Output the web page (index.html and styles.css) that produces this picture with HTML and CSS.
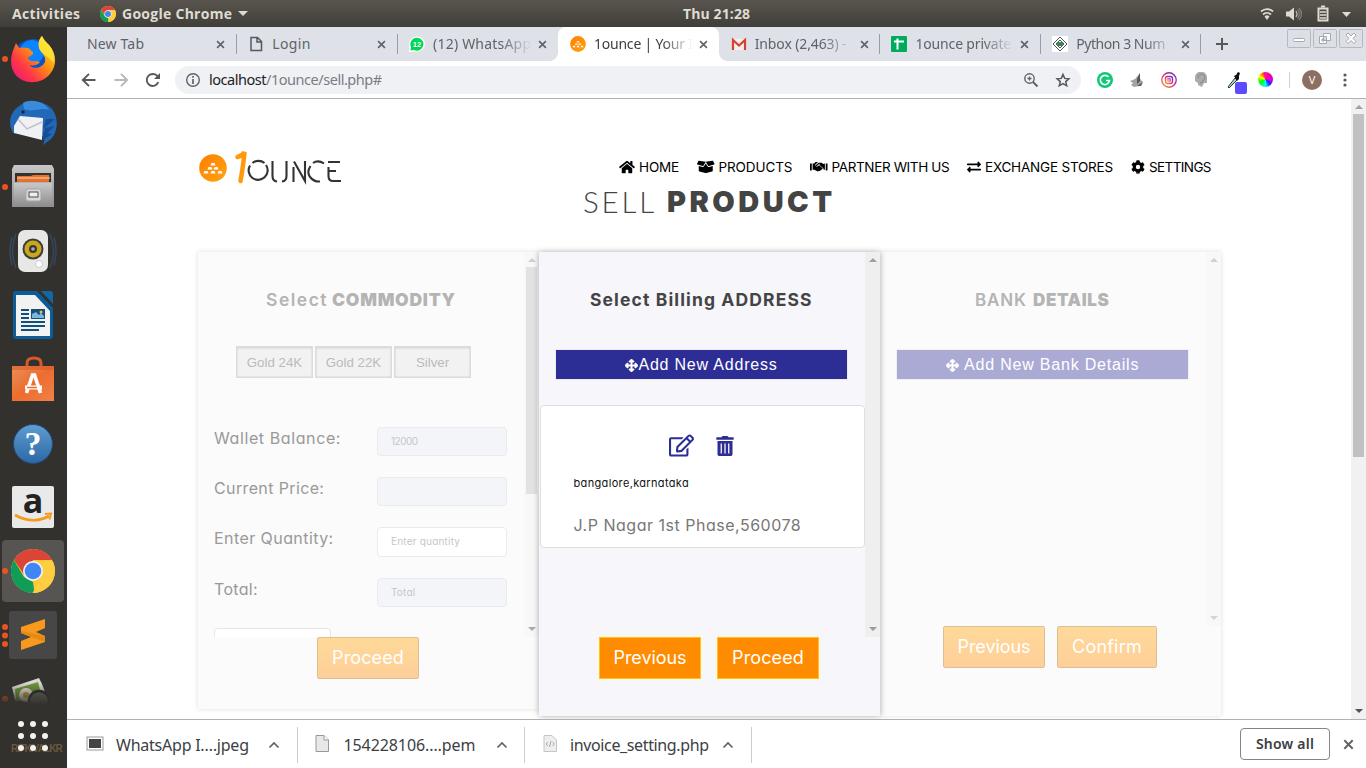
FILE: index.html
```html
<!DOCTYPE html>
<html lang="en">
<head>
<meta charset="utf-8">
<title>1ounce | Your</title>
<link rel="stylesheet" href="styles.css">
</head>
<body>
<svg width="0" height="0" class="defs">
  <defs>
    <linearGradient id="fox" x1="1" y1="0" x2="0" y2="1"><stop offset="0" stop-color="#fff44f"/><stop offset=".4" stop-color="#ff980e"/><stop offset=".7" stop-color="#ff3647"/><stop offset="1" stop-color="#e31587"/></linearGradient>
    <linearGradient id="cab" x1="0" y1="0" x2="0" y2="1"><stop offset="0" stop-color="#c8c8c8"/><stop offset="1" stop-color="#8e8e8e"/></linearGradient>
    <linearGradient id="blu" x1="0" y1="0" x2="0" y2="1"><stop offset="0" stop-color="#5e9ed1"/><stop offset="1" stop-color="#2c67a4"/></linearGradient>
    <linearGradient id="bag" x1="0" y1="0" x2="1" y2="1"><stop offset="0" stop-color="#e8905a"/><stop offset=".5" stop-color="#ee6c2d"/><stop offset="1" stop-color="#f0834a"/></linearGradient>
    <linearGradient id="gold" x1="0" y1="0" x2="1" y2="1"><stop offset="0" stop-color="#ff7d00"/><stop offset="1" stop-color="#ffa510"/></linearGradient>
    <linearGradient id="insta" x1="0" y1="1" x2="1" y2="0"><stop offset="0" stop-color="#f9a03f"/><stop offset=".45" stop-color="#e1306c"/><stop offset="1" stop-color="#5b2bd0"/></linearGradient>
    <symbol id="chrome" viewBox="0 0 44 44">
      <circle cx="22" cy="22" r="22" fill="#fbc934"/>
      <path d="M3 11A22 22 0 0 1 41.1 11H22L14 27Z" fill="#db4437"/>
      <path d="M2.9 11L13 28L22 33L23.500 44A22 22 0 0 1 2.900 11Z" fill="#0f9d58"/>
      <path d="M22 12H41.500A22 22 0 0 1 21.500 44L31 27Z" fill="#ffcd40"/>
      <circle cx="22" cy="22" r="10" fill="#f1f1f1"/><circle cx="22" cy="22" r="8.300" fill="#4285f4"/>
    </symbol>
    <symbol id="ounce" viewBox="0 0 28 28">
      <circle cx="14" cy="14" r="13.800" fill="url(#gold)"/>
      <path d="M12.500 9h3l1 2.500h-5zM9.500 13h3l1 2.500H8.500zM15.500 13h3l1 2.500h-5zM5.500 17h3l1 2.500h-5zM12.500 17h3l1 2.500h-5zM19.500 17h3l1 2.500h-5z" fill="#fff"/>
    </symbol>
    <symbol id="x" viewBox="0 0 10 10"><path d="M1.200 1.200l7.600 7.600M8.800 1.200L1.200 8.800" stroke="#5f6368" stroke-width="1.800" fill="none"/></symbol>
    <symbol id="up" viewBox="0 0 12 8"><path d="M1.500 6.500L6 2l4.500 4.500" stroke="#5f6368" stroke-width="1.700" fill="none"/></symbol>
    <symbol id="move" viewBox="0 0 512 512"><path fill="currentColor" stroke="currentColor" stroke-width="22" d="M352.200 425.800l-79.200 79.200c-9.400 9.400-24.600 9.400-33.900 0l-79.200-79.200c-15.100-15.100-4.400-41 17-41h51.200V284H127.200v51.200c0 21.400-25.900 32.100-41 17L7 272.900c-9.400-9.400-9.400-24.600 0-33.900L86.200 159.800c15.100-15.100 41-4.400 41 17V228H228V127.200h-51.200c-21.400 0-32.100-25.900-17-41l79.200-79.200c9.400-9.400 24.600-9.400 33.900 0l79.200 79.200c15.100 15.100 4.400 41-17 41h-51.200V228h100.900v-51.200c0-21.400 25.900-32.100 41-17l79.200 79.200c9.400 9.400 9.400 24.600 0 33.900L425.800 352.200c-15.100 15.100-41 4.400-41-17V284h-100.900v100.800h51.200c21.400 0 32.200 25.900 17.100 41z"/></symbol>
  </defs>
</svg>

<header class="topbar">
  <span class="activities">Activities</span>
  <svg class="tb-chrome"><use href="#chrome"/></svg>
  <span class="appname">Google Chrome</span>
  <i class="caret"></i>
  <span class="clock">Thu 21:28</span>
  <svg class="tray" viewBox="0 0 96 20" fill="none">
    <path d="M2 7.500a9 9 0 0 1 12 0M4 10.500a6 6 0 0 1 8 0" stroke="#dfdbd2" stroke-width="1.700"/><path d="M5.500 12.500a3.500 3.500 0 0 1 5 0L8 16z" fill="#dfdbd2"/>
    <path d="M27 7.500h3l5-4v13l-5-4h-3z" fill="#dfdbd2"/><path d="M37 7q2 3 0 6" stroke="#bdb9b1" stroke-width="1.200"/><path d="M38.500 5.500q3.500 4.500 0 9M40 4q5 6 0 12" stroke="#85827b" stroke-width="1.200"/>
    <path d="M59.500 4.500h9v12h-9z" stroke="#dfdbd2" stroke-width="2"/><path d="M62 1.500h4v2h-4z" fill="#dfdbd2"/><path d="M61 8h6M61 11h6M61 14h6" stroke="#dfdbd2" stroke-width="1.300"/>
    <path d="M83 8h9l-4.500 5z" fill="#dfdbd2"/>
  </svg>
</header>

<div class="desktop">
  <nav class="dock">
    <div class="app one"><svg viewBox="0 0 64 64">
      <circle cx="32" cy="32" r="20" fill="#0a55c4"/><circle cx="31" cy="25" r="12" fill="#0a84ff"/>
      <path d="M41 9c2 4 4 6 7 9 8 9 8 21 1 29-9 11-27 11-35 0-5-7-5-17-1-26l2-5 3 5c3-1 6 0 9 0 3 1 2 3 5 4 1 3-4 4-5 6 2 5 8 2 12 4-3 4-8 4-11 3 5 5 13 3 16-3 1-5-2-8-5-12-2-5-2-10 2-14z" fill="url(#fox)"/>
      <path d="M41 9c2 4 4 6 7 9 5 6 6 12 4 18-2-6-12-8-14-15-1-4 0-9 3-12z" fill="#ffe633" opacity=".85"/>
    </svg></div>
    <div class="app"><svg viewBox="0 0 64 64">
      <path d="M18 15c10-7 25-6 33 3 7 9 6 23-1 30l-8 6c2-5 2-7 0-9L12 42C7 33 8 22 18 15z" fill="#2268b8"/>
      <path d="M22 12c8-5 22-1 26 7-10-3-15 3-25-1z" fill="#3b8bdc"/><path d="M54 28l-12 10 3-10zM54 35l-12 11 2-9zM51 43l-9 6V41z" fill="#174e93"/>
      <path d="M13 35l6-10 23 2-1 22-28-7z" fill="#f0f1f5"/><path d="M17 28l9 10 15-7" fill="none" stroke="#c0c0c5" stroke-width="1.400"/><circle cx="22" cy="21" r="1.800" fill="#102b52"/>
    </svg></div>
    <div class="app one"><svg viewBox="0 0 64 64">
      <path d="M13 10h38l2 4v38H11V14z" fill="url(#cab)"/><path d="M14 18h36v9H14z" fill="#35332d"/><path d="M16 21h14l2-1h16v7H16z" fill="#e57330"/><path d="M16 23h33" stroke="#ffd2ae"/>
      <path d="M13 28h38v23H13z" fill="url(#cab)"/><rect x="25" y="34" width="15" height="12" rx="2" fill="#d8d8d8" stroke="#a6a6a6"/><rect x="28" y="37" width="9" height="5" fill="#eee" stroke="#4d4d4d"/>
    </svg></div>
    <div class="app"><svg viewBox="0 0 64 64">
      <path d="M15 15q-7 17 0 34M49 15q7 17 0 34M11 18q-4 14 0 28M53 18q4 14 0 28" stroke="#34455c" stroke-width="1.600" fill="none"/>
      <rect x="17" y="11" width="30" height="42" rx="7" fill="#e7e7e5"/><circle cx="32" cy="30" r="10.500" fill="#3d3d3b"/><circle cx="32" cy="30" r="8.500" fill="#c9a81c"/><circle cx="32" cy="30" r="4" fill="#3a3a35"/><circle cx="32" cy="30" r="1.800" fill="#aaa"/><circle cx="38" cy="45" r="3.500" fill="#fff" stroke="#ccc"/>
    </svg></div>
    <div class="app"><svg viewBox="0 0 64 64">
      <path d="M14 8h22l16 17v28q0 3-3 3H15q-3 0-3-3V11q0-3 2-3z" fill="#0b5c97"/><path d="M40 8h9q3 0 3 3v10z" fill="#1268a7"/><path d="M15 12h19l15 16v25H15z" fill="#f2f2f2"/>
      <path d="M20 27h8M20 31h8M20 35h8M20 39h24M20 43h24M20 47h18" stroke="#10507b" stroke-width="2"/><path d="M30 26h14v10H30z" fill="#10507b"/><path d="M31 35v-4l4-2 3 3 2-2 3 3v2z" fill="#7bb6db"/><circle cx="40" cy="29" r="1.500" fill="#f5bd3a"/>
    </svg></div>
    <div class="app"><svg viewBox="0 0 64 64">
      <path d="M26 21v-5q0-5 7-5t7 5v5" stroke="#d9582b" stroke-width="3" fill="none"/><path d="M11 19h42v35H11z" fill="url(#bag)"/><path d="M11 19h42v4H11z" fill="#d75627" opacity=".5"/>
      <path d="M25.500 46l6-18h2l6 18" stroke="#fff" stroke-width="3.600" fill="none"/><path d="M24 40.500h17" stroke="#fff" stroke-width="4"/><path d="M26 40.500h10" stroke="#ee6c2d" stroke-width="1.500"/>
    </svg></div>
    <div class="app"><svg viewBox="0 0 64 64"><circle cx="32" cy="33" r="19.500" fill="url(#blu)" stroke="#1f4a78"/><text x="32" y="44" class="qmark">?</text></svg></div>
    <div class="app"><svg viewBox="0 0 64 64"><rect x="11" y="11" width="42" height="42" rx="2" fill="#e9e9e9"/><text x="32" y="38" class="amz">a</text><path d="M14 40q18 10 34 1" stroke="#f79a1c" stroke-width="2.600" fill="none"/><path d="M44 39l6-.500-1.500 6" stroke="#f79a1c" stroke-width="2" fill="none"/></svg></div>
    <div class="app one active"><svg viewBox="0 0 64 64"><use href="#chrome" x="10" y="10" width="44" height="44"/></svg></div>
    <div class="app three"><svg viewBox="0 0 64 64"><rect x="8" y="8" width="48" height="48" rx="3" fill="#474747"/><path d="M20 24l24-8v9l-9 4 9 4v6l-24 8v-9l10-4-10-4z" fill="#f8981d"/><path d="M20 30l0-2 24 5v6z" fill="#e58a14"/></svg></div>
    <div class="app one clipped"><svg viewBox="0 0 64 64"><path d="M11 20l27-9 3 6 6 16H14z" fill="#d8d8d2"/><path d="M14 22l23-7 5 19H15z" fill="#6e9438"/><circle cx="25" cy="28" r="7" fill="#e9e8dc"/><circle cx="25" cy="28" r="3" fill="#c6a32e"/><circle cx="38" cy="34" r="10" fill="#5d6655" stroke="#25282a" stroke-width="2.500"/></svg></div>
    <div class="launcher"><span class="wall">RIFKIVALKR</span><svg viewBox="0 0 67 64" fill="#f2f2f0"><circle cx="21" cy="20" r="3"/><circle cx="33" cy="20" r="3"/><circle cx="45" cy="20" r="3"/><circle cx="21" cy="32" r="3"/><circle cx="33" cy="32" r="3"/><circle cx="45" cy="32" r="3"/><circle cx="21" cy="44" r="3"/><circle cx="33" cy="44" r="3"/><circle cx="45" cy="44" r="3"/></svg></div>
  </nav>

  <div class="browser">
    <div class="tabs">
      <div class="tab plain"><span class="t t1">New Tab</span><svg class="x"><use href="#x"/></svg></div>
      <div class="tab sep"><svg class="fav" viewBox="0 0 16 16"><path d="M3 1.500h6.500l4 4v9H3zM9 1.500V6h4.500" fill="none" stroke="#55585d" stroke-width="1.500"/></svg><span class="t t2">Login</span><svg class="x"><use href="#x"/></svg></div>
      <div class="tab sep"><svg class="fav" viewBox="0 0 16 16"><path d="M0 16V8a8 7.500 0 1 1 8 7.500z" fill="#fff"/><path d="M1.500 14.500L2 11a6.500 6.500 0 1 1 3 3z" fill="#00d757"/><text x="8" y="11" class="badge">12</text></svg><span class="t t3 fade">(12) WhatsApp</span><svg class="x"><use href="#x"/></svg></div>
      <div class="tab on"><svg class="fav"><use href="#ounce"/></svg><span class="t t4 fade">1ounce | Your I</span><svg class="x"><use href="#x"/></svg></div>
      <div class="tab"><svg class="fav" viewBox="0 0 16 16"><path d="M1 3h14v11H1z" fill="#f4f0ef"/><path d="M2 14V4l6 5.500L14 4v10" fill="none" stroke="#d8402f" stroke-width="2.200"/></svg><span class="t t5 fade">Inbox (2,463) -</span><svg class="x"><use href="#x"/></svg></div>
      <div class="tab sep"><svg class="fav" viewBox="0 0 16 16"><rect width="16" height="16" rx="1" fill="#00ac5c"/><path d="M3 5.500h10M6.500 2.500v11" stroke="#fff" stroke-width="2"/></svg><span class="t t6 fade">1ounce private</span><svg class="x"><use href="#x"/></svg></div>
      <div class="tab sep"><svg class="fav" viewBox="0 0 16 16"><path d="M0 0h16v16H0z" fill="#fff"/><path d="M8 1l7 7-7 7-7-7zM8 4l4 4-4 4-4-4z" fill="none" stroke="#4e5550"/><path d="M4.500 7l2-1.500 1.500 1 1.500-1 2 1.500L10 10H6z" fill="#398253"/></svg><span class="t t7 fade">Python 3 Num</span><svg class="x"><use href="#x"/></svg></div>
      <div class="newtab"><svg viewBox="0 0 12 12"><path d="M6 0v12M0 6h12" stroke="#55585d" stroke-width="2"/></svg></div>
      <div class="winbtns">
        <svg viewBox="0 0 24 19"><rect x=".5" y=".5" width="23" height="18" rx="1" class="wb"/><rect x="6.500" y="9.500" width="11" height="3" rx="1" class="wi"/></svg>
        <svg viewBox="0 0 24 19"><rect x=".5" y=".5" width="23" height="18" rx="1" class="wb"/><path d="M10.500 4.500h7v7h-7zM6.500 7.500h7v7h-7zM9 10h2v2H9z" class="wi"/></svg>
        <svg viewBox="0 0 24 19"><rect x=".5" y=".5" width="23" height="18" rx="1" class="wb"/><path d="M7 6l2-2 3 3 3-3 2 2-3 3.500 3 3-2 2-3-3-3 3-2-2 3-3z" class="wi"/></svg>
      </div>
    </div>

    <div class="toolbar">
      <svg class="navbtn" viewBox="0 0 16 16"><path d="M14.500 8H2M8 1.800L1.800 8 8 14.200" fill="none" stroke="#55585d" stroke-width="1.900"/></svg>
      <svg class="navbtn" viewBox="0 0 16 16"><path d="M1.500 8H14M8 1.800L14.200 8 8 14.200" fill="none" stroke="#b6b8ba" stroke-width="1.900"/></svg>
      <svg class="navbtn" viewBox="0 0 16 16"><path d="M13.300 10.200A6 6 0 1 1 12 3.700l1.500 1.500" fill="none" stroke="#55585d" stroke-width="1.900"/><path d="M15 1v6H9z" fill="#55585d"/></svg>
      <div class="omni">
        <svg class="info" viewBox="0 0 16 16"><circle cx="8" cy="8" r="6.300" fill="none" stroke="#5f6368" stroke-width="1.400"/><path d="M8 7v5M8 4v1.700" stroke="#5f6368" stroke-width="1.700"/></svg>
        <span class="url"><b>localhost</b>/1ounce/sell.php#</span>
        <svg class="oi" viewBox="0 0 16 16" fill="none" stroke="#5f6368" stroke-width="1.400"><circle cx="6.500" cy="6.500" r="4.700"/><path d="M10 10l4.500 4.500"  stroke-width="1.900"/><path d="M6.500 4.500v4M4.500 6.500h4"/></svg>
        <svg class="oi" viewBox="0 0 16 16"><path d="M8 2.500l1.700 3.900 4.200.400-3.200 2.800 1 4.200L8 11.600l-3.700 2.200 1-4.200L2.100 6.800 6.300 6.400z" fill="none" stroke="#55585d" stroke-width="1.500"/></svg>
      </div>
      <div class="exts">
        <svg viewBox="0 0 16 16"><circle cx="8" cy="8" r="8" fill="#10c778"/><path d="M11.500 5A4.600 4.600 0 1 0 12.500 8.500H9" fill="none" stroke="#fff" stroke-width="1.700"/></svg>
        <svg viewBox="0 0 16 16"><path d="M1 9l5-2 5-6 0 6 3 3-4 4-5 1-3-2 2-2z" fill="#a3a3a3"/><path d="M8 7l3-6v8l-3 3zM8 14l6-4-2 4z" fill="#555"/></svg>
        <svg viewBox="0 0 16 16" fill="none" stroke="url(#insta)" stroke-width="1.400"><circle cx="8" cy="8" r="7.200"/><rect x="4.500" y="4.500" width="7" height="7" rx="2"/><rect x="6.800" y="6.800" width="2.400" height="2.400" stroke-width="1"/></svg>
        <svg viewBox="0 0 16 16"><path d="M2 6a6 6 0 0 1 12-1v6h-3l-2 4-4-2V11L2 9z" fill="#ababab"/><path d="M5 6a3.500 3.500 0 1 1 4 3M7 11l3-1" stroke="#888" fill="none"/></svg>
        <svg class="picker" viewBox="0 0 20 22"><path d="M1 15l7-9 2 2-8 8z" fill="#b9d0c0" stroke="#243" /><path d="M7 4l2-1 2-3 2 1-1 3 0 3-2 2z" fill="#111"/><rect x="8" y="10" width="12" height="12" rx="2" fill="#5c4bff"/></svg>
        <i class="wheel"></i>
      </div>
      <i class="tsep"></i><span class="avatar">V</span>
      <svg class="kebab" viewBox="0 0 4 14" fill="#55585d"><circle cx="2" cy="2" r="1.600"/><circle cx="2" cy="7" r="1.600"/><circle cx="2" cy="12" r="1.600"/></svg>
    </div>

    <div class="viewport">
      <main class="page">
        <div class="nav">
          <svg class="logo" viewBox="0 0 144 36">
            <use href="#ounce" x="0" y="5" width="28" height="28"/>
            <path d="M38.500 8q5-1 7-5-1 12-4 29" fill="none" stroke="#ff9a0d" stroke-width="4.500" stroke-linecap="round"/>
            <g fill="none" stroke="#333" stroke-width="2.100"><path d="M51 16.500a9.500 9.500 0 1 0 16-.500M53.500 14a9.500 9.500 0 0 1 12 0"/><path d="M73.500 12v15q0 5 4.500 5.500M87.500 12v15q0 5-4.500 5.500"/><path d="M94.500 33V18M95 12.500L106 32V12"/><path d="M125 14.500q-6-4-11-.500M111.500 17q-4 6-.500 11 4 5 10 4.500"/><path d="M129 13h12M129.500 18v9q0 5 4.500 5h8M130 22h7"/></g>
          </svg>
          <ul class="menu">
            <li class="m1"><svg viewBox="0 0 576 512"><path d="M280 148L96 300v164a16 16 0 0 0 16 16h112a16 16 0 0 0 16-16v-96a16 16 0 0 1 16-16h64a16 16 0 0 1 16 16v96a16 16 0 0 0 16 16h112a16 16 0 0 0 16-16V300L296 148a12 12 0 0 0-16 0zM572 251l-84-69V44a12 12 0 0 0-12-12h-56a12 12 0 0 0-12 12v72l-90-74a48 48 0 0 0-61 0L4 251a12 12 0 0 0-1 17l25 31a12 12 0 0 0 17 2L280 107a12 12 0 0 1 16 0l235 194a12 12 0 0 0 17-2l25-31a12 12 0 0 0-1-17z"/></svg><span>HOME</span></li>
            <li class="m2"><svg viewBox="0 0 640 512"><path d="M425 256c-17 0-33-9-41-24l-64-106-64 106c-9 15-25 24-42 24-4 0-9-1-13-2L64 215v178c0 15 10 28 24 31l217 54c10 3 21 3 31 0l216-54c14-4 24-17 24-31V215l-137 39c-5 1-10 2-14 2zm213-118L587 36c-4-7-11-10-18-10L320 64l92 152c4 6 11 9 18 7l198-57c12-3 17-17 10-28zM53 36L2 138c-6 11-1 25 11 28l197 57c7 2 14-1 18-7L320 64 71 26c-7 0-14 3-18 10z"/></svg><span>PRODUCTS</span></li>
            <li class="m3"><svg viewBox="0 0 640 512"><path d="M0 128h64v256H0zM576 128h64v256h-64zM96 128h54l52-52h92l-86 80c-22 21-22 55 0 76 20 19 54 20 76 0l45-41 123 100c13 11 16 27 5 39-10 13-26 12-34 6 4 32-19 47-41 37-7 26-36 43-61 20-6 21-41 35-69 11L150 352H96zM544 128v224h-44c0-37-20-60-44-77L342 182l20-18-22-24-98 89c-12 8-25 7-33-3-8-11-7-22 3-32l91-82c11-10 25-16 40-16h85l52 52z"/></svg><span>PARTNER WITH US</span></li>
            <li class="m4"><svg viewBox="0 0 512 512"><path d="M0 168v-16c0-13 11-24 24-24h360V80c0-21 26-32 41-17l80 80c9 9 9 25 0 34l-80 80c-15 15-41 4-41-17v-48H24c-13 0-24-11-24-24zm488 152H128v-48c0-21-26-32-41-17L7 335c-9 9-9 25 0 34l80 80c15 15 41 4 41-17v-48h360c13 0 24-11 24-24v-16c0-13-11-24-24-24z"/></svg><span>EXCHANGE STORES</span></li>
            <li class="m5"><svg viewBox="0 0 512 512"><path fill-rule="evenodd" d="M487 316l-42-25c4-23 4-47 0-70l42-25c5-3 8-9 6-14-12-36-31-68-55-94-4-4-10-5-15-2l-43 24c-18-15-39-27-61-35V26c0-6-4-11-9-12-36-8-74-8-109 0-5 1-9 6-9 12v49c-22 8-43 20-61 35L89 86c-5-3-11-2-15 2-24 26-43 58-55 94-2 5 1 11 6 14l42 25c-4 23-4 47 0 70l-42 25c-5 3-8 9-6 14 12 36 31 68 55 94 4 4 10 5 15 2l42-24c18 15 39 27 61 35v49c0 6 4 11 9 12 36 8 74 8 109 0 5-1 9-6 9-12v-49c22-8 43-20 61-35l43 24c5 3 11 2 15-2 24-26 43-58 55-94 1-5-1-11-6-14zM256 336a80 80 0 1 1 0-160 80 80 0 0 1 0 160z"/></svg><span>SETTINGS</span></li>
          </ul>
        </div>
        <h1><span>SELL</span> <b>PRODUCT</b></h1>

        <div class="cards">
          <section class="card side first">
            <div class="scroll">
              <div class="inner">
                <h2 class="h-com"><span>Select</span> <b>COMMODITY</b></h2>
                <div class="kinds"><button>Gold 24K</button><button>Gold 22K</button><button>Silver</button></div>
                <div class="row"><label class="l1">Wallet Balance:</label><span class="inp dis i1">12000</span></div>
                <div class="row"><label class="l2">Current Price:</label><span class="inp dis"></span></div>
                <div class="row"><label class="l3">Enter Quantity:</label><span class="inp open i2">Enter quantity</span></div>
                <div class="row"><label class="l4">Total:</label><span class="inp dis i2">Total</span></div>
                <span class="stub"></span>
              </div>
              <div class="sbar"><i class="su"></i><i class="thumb"></i><i class="sd"></i></div>
            </div>
            <div class="acts"><span class="btn pale b2">Proceed</span></div>
          </section>

          <section class="card focus">
            <div class="scroll">
              <div class="inner">
                <h2 class="h-bill">Select Billing ADDRESS</h2>
                <button class="add"><svg><use href="#move"/></svg>Add New Address</button>
                <div class="addr">
                  <div class="tools">
                    <svg class="edit" viewBox="0 0 576 512"><path d="M402.300 344.900l32-32c5-5 13.700-1.500 13.700 5.700V464c0 26.500-21.500 48-48 48H48c-26.500 0-48-21.500-48-48V112c0-26.500 21.500-48 48-48h273.500c7.100 0 10.700 8.600 5.700 13.700l-32 32c-1.500 1.500-3.500 2.300-5.700 2.300H48v352h352V350.500c0-2.100.800-4.100 2.300-5.600zm156.600-201.800L296.300 405.700l-90.400 10c-26.200 2.900-48.500-19.200-45.600-45.600l10-90.400L432.900 17.100c22.900-22.900 59.900-22.900 82.700 0l43.200 43.200c22.900 22.900 22.900 60 .1 82.800zM460.100 174L402 115.900 216.200 301.800l-7.300 65.300 65.300-7.300L460.100 174zm64.800-79.700l-43.200-43.200c-4.100-4.100-10.800-4.100-14.800 0L436 82l58.100 58.100 30.900-30.900c4-4.200 4-10.800-.100-14.900z"/></svg>
                    <svg class="bin" viewBox="0 0 448 512"><path fill-rule="evenodd" d="M0 84V56c0-13 11-24 24-24h112l10-19c4-8 12-13 21-13h114c9 0 17 5 21 13l10 19h112c13 0 24 11 24 24v28c0 7-5 12-12 12H12C5 96 0 91 0 84zm32 44h384v336c0 26-22 48-48 48H80c-26 0-48-22-48-48zm80 64v256h32V192zm96 0v256h32V192zm96 0v256h32V192z"/></svg>
                  </div>
                  <p class="city">bangalore,karnataka</p>
                  <p class="street">J.P Nagar 1st Phase,560078</p>
                </div>
              </div>
              <div class="sbar"><i class="su"></i><i class="sd"></i></div>
            </div>
            <div class="acts"><span class="btn b1">Previous</span><span class="btn b2">Proceed</span></div>
          </section>

          <section class="card side last">
            <div class="scroll">
              <div class="inner">
                <h2 class="h-bank"><span>BANK</span> <b>DETAILS</b></h2>
                <button class="add"><svg><use href="#move"/></svg>&nbsp;Add New Bank Details</button>
              </div>
              <div class="sbar"><i class="su"></i><i class="sd"></i></div>
            </div>
            <div class="acts"><span class="btn pale b1">Previous</span><span class="btn pale b3">Confirm</span></div>
          </section>
        </div>
      </main>
      <div class="pagebar"><i class="su"></i><i class="thumb"></i><i class="sd"></i></div>
    </div>

    <footer class="shelf">
      <div class="dl d1"><svg class="f" viewBox="0 0 18 20"><rect x="1" y="2" width="16" height="13" fill="#fff" stroke="#999"/><rect x="3" y="4" width="12" height="9" fill="#444"/></svg><span>WhatsApp I.…jpeg</span><svg class="up"><use href="#up"/></svg></div>
      <div class="dl d2"><svg class="f" viewBox="0 0 18 20"><path d="M3 .500h8l4.500 4.500v11.500H3z" fill="#e8e8e8" stroke="#999"/><path d="M11 .500V5h4.500" fill="#fff" stroke="#999"/></svg><span>154228106.…pem</span><svg class="up"><use href="#up"/></svg></div>
      <div class="dl d3"><svg class="f" viewBox="0 0 18 20"><path d="M3 .500h8l4.500 4.500v11.500H3z" fill="#eee" stroke="#c5c5c5"/><path d="M7 7l-2 2 2 2M11.500 7l2 2-2 2M10 6l-1.500 6" fill="none" stroke="#aaa"/></svg><span>invoice_setting.php</span><svg class="up"><use href="#up"/></svg></div>
      <span class="showall">Show all</span>
      <svg class="sx"><use href="#x"/></svg>
    </footer>
  </div>
</div>
</body>
</html>
```
FILE: styles.css
```css
*{box-sizing:border-box}
body{margin:0;width:1366px;height:768px;overflow:hidden;font-family:"Noto Sans","Open Sans",sans-serif;background:#fff}
.defs{position:absolute}
svg{display:block;flex:none}
h1,h2,p,ul{margin:0;padding:0;list-style:none}

/* system bar */
.topbar{height:27px;display:flex;align-items:center;background:linear-gradient(#59554e,#403e39);color:#dfdbd2;font:700 14px "Open Sans",sans-serif;padding-left:12px}
.activities{width:88px;letter-spacing:.33px}
.tb-chrome{width:16px;height:16px}
.appname{margin-left:6px;width:110px;letter-spacing:.27px;white-space:nowrap}
.caret{margin-left:6px;border:5px solid transparent;border-top-color:#dfdbd2;border-bottom:0}
.clock{margin-left:435px;letter-spacing:.11px;width:80px;white-space:nowrap;font-size:14px}
.tray{width:96px;height:20px;margin-left:496px}

.desktop{display:flex;height:741px}
.dock{width:67px;height:741px;background:#33312d;display:flex;flex-direction:column}
.app{height:64px;flex:none;display:flex;align-items:center;padding-left:1px;position:relative}
.app svg{width:64px;height:64px}
.app.one::before{content:"";position:absolute;left:2px;top:29px;width:6px;height:6px;border-radius:50%;background:#e95420}
.app.three::before{content:"";position:absolute;left:2px;top:21px;width:6px;height:6px;border-radius:50%;background:#e95420;box-shadow:0 8.500px #e95420,0 17px #e95420}
.app.active::after{content:"";position:absolute;left:2px;top:1px;width:62px;height:62px;border-radius:4px;background:#575551;z-index:0}
.app.active svg,.app.active::before{z-index:1}
.app.active svg{position:relative}
.clipped{height:37px;overflow:hidden;align-items:flex-start}
.clipped::after{content:"";position:absolute;inset:16px 0 0 0;background:linear-gradient(transparent,#33312dcc 85%,#33312d)}
.launcher{height:64px;display:grid}
.launcher>*{grid-area:1/1}
.launcher svg{width:67px;height:64px}
.wall{margin:36px 0 0 11px;width:56px;height:18px;color:#6b583d;font:700 10px/18px "Liberation Sans",sans-serif;letter-spacing:-.9px;white-space:nowrap}
.qmark{font:700 34px "Liberation Serif",serif;fill:#fff;text-anchor:middle}
.amz{font:700 34px "Open Sans",sans-serif;fill:#222;text-anchor:middle}

/* browser frame */
.browser{width:1299px;height:741px;display:flex;flex-direction:column}
.tabs{height:34px;background:#dee1e8;display:flex;padding-left:8.500px}
.tab{width:160.800px;height:34px;display:flex;align-items:center;padding-left:12px;color:#5f6368;font-size:14px;flex:none;position:relative}
.plain .t{margin-left:-.5px;width:129px}
.fav{width:16px;height:16px}
.t{margin-left:8px;width:105px;white-space:nowrap;overflow:hidden;padding-bottom:2px}
.fade{-webkit-mask-image:linear-gradient(90deg,#000 65%,transparent 94%);mask-image:linear-gradient(90deg,#000 65%,transparent 94%)}
.x{width:9px;height:9px}
.sep::before,.tab:nth-child(7)::after{content:"";position:absolute;left:0;top:7px;width:1px;height:20px;background:#9a9da3}
.tab:nth-child(7)::after{left:auto;right:0}
.on{background:#fff;border-radius:8px 8px 0 0;color:#3c4043}
.on::before,.on::after{content:"";position:absolute;bottom:0;width:8px;height:8px;background:radial-gradient(circle at 0 0,transparent 7.500px,#fff 8px)}
.on::before{left:-8px}
.on::after{right:-8px;transform:scaleX(-1)}
.t1{letter-spacing:.16px}.t2{letter-spacing:.33px}.t3{letter-spacing:.2px}.t4{letter-spacing:-.2px}.t5{letter-spacing:-.12px}.t6{letter-spacing:-.17px}.t7{letter-spacing:-.46px}
.badge{font:700 7.500px "Liberation Sans",sans-serif;fill:#fff;text-anchor:middle}
.newtab{width:40px;display:flex;align-items:center;padding-left:15px}
.newtab svg{width:12px;height:12px}
.winbtns{display:flex;gap:2px;margin-left:46px;padding-top:2px}
.winbtns svg{width:24px;height:19px}
.wb{fill:#dcdfe5;stroke:#b5b8be}.wi{fill:#fff;stroke:#a5a8ae;fill-rule:evenodd}

.toolbar{height:38px;border-bottom:1px solid #b1b1b1;display:flex;align-items:center;padding-left:14px}
.navbtn{width:16px;height:16px;margin-right:16px}
.omni{margin-left:-2px;width:906px;height:28px;border-radius:14px;background:#f0f1f4;display:flex;align-items:center;padding-left:10px}
.info{width:16px;height:16px}
.url{margin-left:8px;width:814px;flex:none;font-size:14.500px;letter-spacing:-.47px;color:#7a7d82;padding-bottom:2px}
.url b{font-weight:400;color:#202124}
.oi{width:16px;height:16px;margin-right:16px}
.exts{display:flex;align-items:center;gap:16px;margin-left:16px}
.exts svg{width:16px;height:16px}
.exts .picker{width:20px;height:22px;margin:6px -5px 0 2px}
.wheel{width:15px;height:15px;border-radius:50%;background:conic-gradient(#f0f,#f06 12%,#c0f 25%,#22f 38%,#0ff 50%,#0f0 68%,#ff0 82%,#f00)}
.tsep{width:1px;height:16px;background:#cfd0d2;margin-left:16px}
.avatar{width:20px;height:20px;border-radius:50%;background:#8d6e63;color:#fff;font:11px/20px "Open Sans",sans-serif;text-align:center;margin-left:12px}
.kebab{width:4px;height:14px;margin-left:21px}

/* page */
.viewport{height:620px;display:flex;overflow:hidden}
.page{width:1284px;height:620px;font-family:Inter,sans-serif;font-feature-settings:"cv11";padding-left:131px;overflow:hidden}
.nav{height:87px;display:flex;align-items:flex-start;padding-top:50px}
.logo{width:144px;height:36px;margin-left:1px}
.menu{display:flex;margin-left:276px;padding-top:9px;font-size:13.500px;line-height:18px;color:#000}
.menu li{display:flex;align-items:center;white-space:nowrap}
.menu svg{height:14px}
.m1 svg{width:16px}.m1{width:78px}.m1 span{margin-left:4px;letter-spacing:-.15px}
.m2 svg{width:17.500px}.m2{width:113px}.m2 span{margin-left:4px;letter-spacing:-.1px}
.m3 svg{width:17.500px}.m3{width:157px}.m3 span{margin-left:4px;letter-spacing:-.37px}
.m4 svg{width:14px}.m4{width:164px}.m4 span{margin-left:4px;letter-spacing:-.2px}
.m5 svg{width:14px}.m5 span{margin-left:4px;letter-spacing:-.6px}
h1{height:66px;font:700 29px/32px Inter,sans-serif;color:#444;padding-left:385px;white-space:nowrap;display:flex}
h1 span{width:84px;font-family:Lato,sans-serif;font-weight:300;font-size:29.500px;letter-spacing:2.800px}
h1 b{letter-spacing:3.450px}
.cards{display:flex;align-items:flex-start}
.card{width:341px;height:464px}
.side{background:#fbfbfb;box-shadow:0 0 5px #0002}
.first{height:457px}
.focus{background:#f6f6fb;box-shadow:0 0 6px #0005;position:relative;z-index:1}
.scroll{display:flex;height:385px;overflow:hidden}
.last .scroll{height:374px}
.inner{width:326px;height:100%;overflow:hidden}
.sbar{width:15px;background:#efefef;display:flex;flex-direction:column;align-items:center;padding:6px 0}
.side .sbar{background:#f8f8f8}
.su{border:4px solid transparent;border-top:0;border-bottom-color:#a0a0a0}
.sd{border:4px solid transparent;border-bottom:0;border-top-color:#999;margin-top:auto}
.side .su{border-bottom-color:#d0d0d0}
.last .sd{border-top-color:#d4d4d4}
.first .sd{border-top-color:#aaa}
.first .thumb{width:11px;height:227px;background:#e2e2e2;margin-top:5px}
h2{font:700 17.500px/24px Inter,sans-serif;color:#444;height:98px;padding-top:36px;white-space:nowrap;display:flex;letter-spacing:1px}
.side h2{color:#b4b4b4}
.h-com{padding-left:68px}.h-com span{font-weight:600;width:66px;letter-spacing:1.500px}.h-com b{letter-spacing:.75px}
.h-bill{padding-left:51px;letter-spacing:1.120px}
.h-bank{padding-left:95px}.side .h-bank{font-size:17px}.h-bank span{font-weight:600;width:58px;letter-spacing:.8px}.h-bank b{letter-spacing:.6px}
.kinds{display:flex;gap:2px;padding-left:38px;margin-top:-4px}
.kinds button{width:77px;height:32px;padding:0;background:#f2f2f2;border:1px solid #dcdcdc;border-top-width:2px;box-shadow:inset 0 0 2px #0003;color:#bbb;font:13.300px "Liberation Sans",Arial,sans-serif}
.kinds+.row{margin-top:49px}
.row{display:flex;height:50.200px;padding-left:16px}
label{width:163px;font-size:16px;line-height:23px;color:#999;white-space:nowrap}
.l1{letter-spacing:.6px}.l2{letter-spacing:.37px}.l3{letter-spacing:.43px}.l4{letter-spacing:.31px}
.inp{width:130px;height:29px;border:1px solid #e9ebee;border-radius:4px;padding-left:13px;font-size:10px;line-height:26px;color:#c6c6c9}
.dis{background:#f4f5f8}.open{background:#fff;height:30px;line-height:27px}
.i1{letter-spacing:-.5px}.i2{letter-spacing:.2px}
.stub{display:block;width:117px;height:30px;border:1px solid #e6e6e8;border-radius:4px;background:#fff;margin-left:16px}
.acts{display:flex}
.btn{height:42px;width:102px;background:#ff8c00;border:1px solid #ffc800;color:#fff;font-size:18px;line-height:40px;text-align:center}
.pale{background:linear-gradient(#fed999,#fecf99);border-color:#dcc094;border-radius:2px}
.b2{letter-spacing:.1px}.b3{letter-spacing:.2px;width:100px}.b1{letter-spacing:-.08px}
.first .acts{padding-left:119px}
.focus .acts{padding-left:60px;gap:16px}
.last .acts{padding-left:63px;gap:12px}
.add{display:flex;align-items:center;justify-content:center;width:291px;height:29px;margin-left:17px;padding:0;border:0;background:#2d2d96;color:#fff;font:16px "Liberation Sans",Arial,sans-serif;letter-spacing:.8px;box-shadow:0 0 1px #8888}
.add svg{width:13px;height:13px;margin-top:2px}
.last .add{background:#abaad5}
.addr{width:325.500px;height:143px;margin:26px 0 0 .5px;background:#fff;border:1px solid #dfdfdf;border-radius:4px;padding:28px 0 0 33px}
.tools{display:flex;gap:22px;padding-left:95.500px;fill:#2d2d96;height:39px}
.edit{width:25px;height:23px}.bin{width:18px;height:20px;margin-top:2px}
.city{font-size:11px;line-height:20px;letter-spacing:.34px;color:#111}
.street{font-size:16px;line-height:24px;letter-spacing:.51px;color:#777;margin-top:20px;white-space:nowrap}
.pagebar{width:15px;background:#f1f1f1;display:flex;flex-direction:column;align-items:center;padding:6px 0}
.pagebar .thumb{width:11px;height:343px;background:#c1c1c1;margin-top:5px}
.pagebar .sd{border-top-color:#505050}

.shelf{height:49px;border-top:1px solid #b1b1b1;display:flex;align-items:center;color:#3c4043;font-size:16px}
.dl{display:flex;align-items:center;height:36px;border-right:1px solid #ccc;padding-left:19px;white-space:nowrap;margin-top:2px}
.f{width:18px;height:20px}
.up{width:12px;height:8px}
.d1{width:231px}.d2{width:227px}.d3{width:227px;padding-left:16px}
.dl span{margin-left:12px;width:152px}
.d1 span{letter-spacing:-.23px}
.d2{padding-left:15px}.d2 span{width:152px;margin-left:12.500px;letter-spacing:-.09px}
.d3 span{width:152px;margin-left:11px;letter-spacing:-.37px}
.showall{width:90px;height:32px;margin-left:488px;border:1px solid #80868b;border-radius:4px;text-align:center;font-weight:600;font-size:14px;line-height:29px;letter-spacing:.23px}
.sx{width:11px;height:11px;margin-left:13px}
```
